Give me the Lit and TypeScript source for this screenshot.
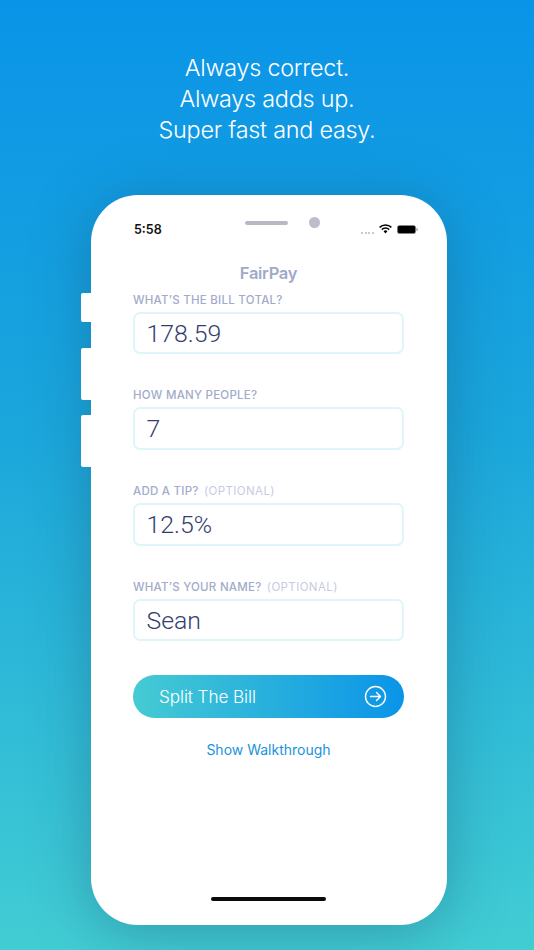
import { LitElement, html, css } from "lit";
import { customElement } from "lit/decorators.js";

@customElement("app-root")
export class AppRoot extends LitElement {
  static styles = css`
    :host {
      display: block;
      width: 534px;
      height: 950px;
      overflow: hidden;
      font-family: Inter, "Liberation Sans", sans-serif;
      background: linear-gradient(180deg, #0a94e8 0%, #1ba6dc 45%, #42cdd4 100%);
    }
    .page {
      display: flex;
      flex-direction: column;
      align-items: center;
      padding-top: 52px;
    }
    .headline {
      color: #fff;
      font-size: 23.4px;
      font-weight: 300;
      line-height: 31px;
      text-align: center;
      letter-spacing: -0.25px;
    }
    .phone {
      position: relative;
      box-sizing: border-box;
      margin-top: 50px;
      margin-left: 4px;
      width: 356px;
      height: 730px;
      background: #fff;
      border-radius: 47px;
      box-shadow: 0 8px 60px rgba(20, 70, 100, 0.36);
      padding: 0 43px 0 42px;
      display: flex;
      flex-direction: column;
    }
    .btn {
      position: absolute;
      left: -10px;
      width: 12px;
      background: #fff;
      border-radius: 2px 0 0 2px;
    }
    .b1 { top: 98px; height: 29px; }
    .b2 { top: 153px; height: 52px; }
    .b3 { top: 220px; height: 52px; }
    .status {
      height: 67.5px;
      position: relative;
      flex: none;
    }
    .time {
      position: absolute;
      left: 1px;
      top: 27px;
      font-size: 12.5px;
      font-weight: 600;
      color: #111;
      line-height: 15px;
    }
    .speaker {
      position: absolute;
      left: 112px;
      top: 26px;
      width: 43px;
      height: 4px;
      border-radius: 2px;
      background: #b9b9c6;
    }
    .camera {
      position: absolute;
      left: 175.5px;
      top: 22px;
      width: 11px;
      height: 11px;
      border-radius: 50%;
      background: #bcbcca;
    }
    .icons {
      position: absolute;
      left: 228px;
      top: 27px;
      display: flex;
      align-items: center;
      gap: 5px;
      height: 14px;
    }
    .dots { display: flex; gap: 1.5px; margin-top: 8px; }
    .dots i { width: 2px; height: 2px; border-radius: 50%; background: #b8b8b8; display: block; }
    .title {
      text-align: center;
      font-size: 16.5px;
      font-weight: 600;
      letter-spacing: -0.3px;
      color: #9fa9c8;
      line-height: 20px;
      flex: none;
    }
    .form {
      display: flex;
      flex-direction: column;
      gap: 34.3px;
      margin-top: 10px;
    }
    .label {
      font-size: 11.5px;
      font-weight: 500;
      letter-spacing: 0.25px;
      line-height: 14px;
      color: #a2abca;
      white-space: nowrap;
    }
    .opt { color: #c6ccdf; font-weight: 400; margin-left: 2px; letter-spacing: 0.4px; }
    .input {
      box-sizing: border-box;
      margin-top: 5px;
      width: 271px;
      height: 42.5px;
      border: 2px solid #e0f5f9;
      border-radius: 7px;
      padding-left: 11.5px;
      font-family: Roboto, Inter, sans-serif;
      font-size: 24.8px;
      font-weight: 300;
      line-height: 40px;
      color: #333d70;
    }
    .cta {
      box-sizing: border-box;
      margin-top: 33.5px;
      width: 271px;
      height: 43px;
      border-radius: 22px;
      background: linear-gradient(90deg, #45cbd3 0%, #0a94e8 100%);
      display: flex;
      align-items: center;
      justify-content: space-between;
      padding: 0 17px 0 26px;
      color: #fff;
      font-size: 17.2px;
      font-weight: 300;
      letter-spacing: -0.1px;
    }
    .cta svg { display: block; }
    .walk {
      margin-top: 23px;
      text-align: center;
      color: #1a93dc;
      font-size: 14px;
      font-weight: 400;
      line-height: 18px;
    }
    .home {
      position: absolute;
      left: 120px;
      bottom: 24px;
      width: 115px;
      height: 4px;
      border-radius: 2px;
      background: #0a0a0a;
    }
  `;

  private field(label: string, value: string, optional = false) {
    return html`<div>
      <div class="label">${label}${optional ? html` <span class="opt">(OPTIONAL)</span>` : ""}</div>
      <div class="input">${value}</div>
    </div>`;
  }

  render() {
    return html`<div class="page">
      <div class="headline">Always correct.<br />Always adds up.<br />Super fast and easy.</div>
      <div class="phone">
        <div class="btn b1"></div>
        <div class="btn b2"></div>
        <div class="btn b3"></div>
        <div class="status">
          <div class="time">5:58</div>
          <div class="speaker"></div>
          <div class="camera"></div>
          <div class="icons">
            <div class="dots"><i></i><i></i><i></i><i></i></div>
            <svg width="13" height="10" viewBox="0 0 13 10">
              <path d="M.6 3.4a8.4 8.4 0 0 1 11.8 0" fill="none" stroke="#000" stroke-width="1.5" />
              <path d="M2.8 5.6a5.2 5.2 0 0 1 7.4 0" fill="none" stroke="#000" stroke-width="1.5" />
              <path d="M4.6 7.3a2.7 2.7 0 0 1 3.8 0L6.5 9.4z" fill="#000" />
            </svg>
            <svg width="21" height="9" viewBox="0 0 21 9">
              <rect x="0.4" y="0.4" width="18.2" height="8.2" rx="2.2" fill="#000" stroke="#888" stroke-width="0.6" />
              <rect x="19.4" y="3" width="1.2" height="3" rx="0.6" fill="#999" />
            </svg>
          </div>
        </div>
        <div class="title">FairPay</div>
        <div class="form">
          ${this.field("WHAT’S THE BILL TOTAL?", "178.59")}
          ${this.field("HOW MANY PEOPLE?", "7")}
          ${this.field("ADD A TIP?", "12.5%", true)}
          ${this.field("WHAT’S YOUR NAME?", "Sean", true)}
        </div>
        <div class="cta">
          <span>Split The Bill</span>
          <svg width="23" height="23" viewBox="0 0 23 23" fill="none" stroke="#fff" stroke-width="1.4" stroke-linecap="round" stroke-linejoin="round">
            <circle cx="11.5" cy="11.5" r="10" />
            <path d="M6.5 11.5h10M12.5 7.5l4 4-4 4" />
          </svg>
        </div>
        <div class="walk">Show Walkthrough</div>
        <div class="home"></div>
      </div>
    </div>`;
  }
}
